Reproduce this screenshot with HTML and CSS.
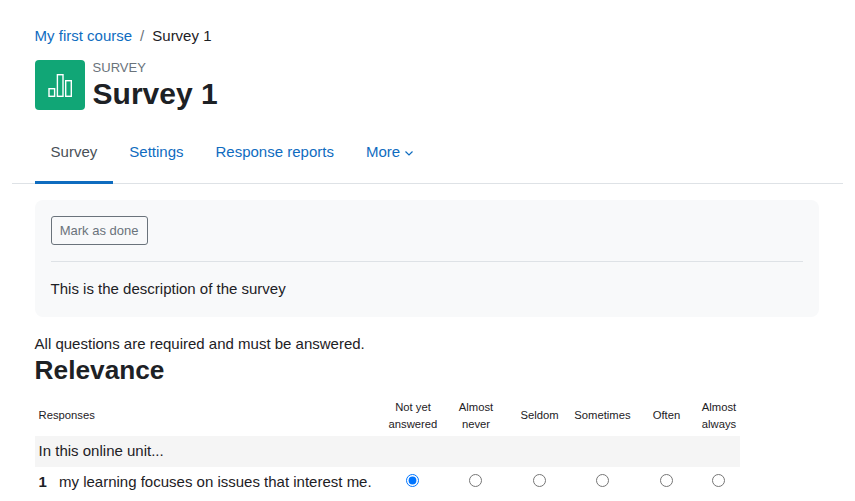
FILE: index.html
```html
<!DOCTYPE html>
<html>
<head>
    <meta charset="utf-8">
    <title>Survey 1</title>
    <link rel="stylesheet" href="styles.css">
</head>
<body>
    <div class="page-header">
        <nav class="breadcrumb">
            <a href="#">My first course</a>
            <span class="breadcrumb-sep">/</span>
            <span>Survey 1</span>
        </nav>
        <div class="activity-header">
            <div class="activity-icon">
                <svg width="24" height="24" viewBox="0 0 24 24" fill="none" stroke="#fff" stroke-width="1.4">
                    <rect x="1" y="15.7" width="5.6" height="7.6"/>
                    <rect x="9.4" y="1.7" width="5.6" height="21.6"/>
                    <rect x="17.7" y="7.7" width="5.6" height="15.6"/>
                </svg>
            </div>
            <div class="activity-titles">
                <div class="activity-type">SURVEY</div>
                <h1>Survey 1</h1>
            </div>
        </div>
    </div>

    <div class="tabs">
        <a class="tab active" href="#">Survey</a>
        <a class="tab" href="#">Settings</a>
        <a class="tab" href="#">Response reports</a>
        <a class="tab" href="#">More
            <svg class="caret" width="10" height="10" viewBox="0 0 10 10" fill="none" stroke="currentColor" stroke-width="1.2">
                <path d="M1.5 3.5 5 7l3.5-3.5"/>
            </svg>
        </a>
    </div>

    <div class="content">
        <div class="description-box">
            <button class="done-button">Mark as done</button>
            <hr>
            <p>This is the description of the survey</p>
        </div>

        <p class="required-note">All questions are required and must be answered.</p>
        <h2>Relevance</h2>

        <table class="survey-table">
            <thead>
                <tr>
                    <th class="col-question">Responses</th>
                    <th class="col-a">Not yet answered</th>
                    <th class="col-b">Almost never</th>
                    <th class="col-c">Seldom</th>
                    <th class="col-d">Sometimes</th>
                    <th class="col-e">Often</th>
                    <th class="col-f">Almost always</th>
                </tr>
            </thead>
            <tbody>
                <tr class="section-row">
                    <td colspan="7">In this online unit...</td>
                </tr>
                <tr class="question-row">
                    <td class="question"><b>1</b>my learning focuses on issues that interest me.</td>
                    <td><input type="radio" name="q1" checked></td>
                    <td><input type="radio" name="q1"></td>
                    <td><input type="radio" name="q1"></td>
                    <td><input type="radio" name="q1"></td>
                    <td><input type="radio" name="q1"></td>
                    <td class="col-f"><input type="radio" name="q1"></td>
                </tr>
            </tbody>
        </table>
    </div>
</body>
</html>
```

FILE: styles.css
```css
* {
    box-sizing: border-box;
}

html {
    overflow: hidden;
}

body {
    margin: 0;
    padding: 0 12px;
    background-color: #fff;
    color: #1d2125;
    font-family: "Liberation Sans", Arial, sans-serif;
    font-size: 15px;
    line-height: 1.5;
}

a {
    color: #0f6cbf;
    text-decoration: none;
}

.page-header {
    padding: 24px 22.6px 0;
}

.breadcrumb {
    display: flex;
    gap: 8px;
    height: 24px;
    align-items: center;
}

.breadcrumb-sep {
    color: #6a737b;
}

.activity-header {
    display: flex;
    margin-top: 12px;
}

.activity-icon {
    width: 50px;
    height: 50px;
    border-radius: 4px;
    background-color: #11a676;
    display: flex;
    align-items: center;
    justify-content: center;
}

.activity-titles {
    margin-left: 8px;
}

.activity-type {
    color: #6a737b;
    font-size: 13px;
    line-height: 15px;
}

h1 {
    margin: 0;
    font-size: 30px;
    font-weight: 700;
    line-height: 37px;
}

.tabs {
    display: flex;
    margin-top: 12px;
    padding: 0 22.6px;
    border-bottom: 1px solid #dee2e6;
    height: 60px;
}

.tab {
    padding: 0 16px;
    height: 60px;
    line-height: 56px;
    white-space: nowrap;
}

.tab.active {
    color: #495057;
    border-bottom: 3px solid #0f6cbf;
}

.caret {
    vertical-align: -1px;
}

.content {
    padding: 0 22.6px;
}

.description-box {
    margin-top: 16px;
    padding: 16px;
    height: 117px;
    width: 784px;
    background-color: #f8f9fa;
    border-radius: 8px;
}

.done-button {
    display: block;
    width: 97px;
    height: 29px;
    padding: 0;
    background: transparent;
    border: 1px solid #6a737b;
    border-radius: 3px;
    color: #6a737b;
    font-family: inherit;
    font-size: 13px;
}

.description-box hr {
    margin: 16px 0 16px;
    border: 0;
    border-top: 1px solid #dee2e6;
}

.description-box p {
    margin: 0;
}

.required-note {
    margin: 16px 0 0;
    line-height: 22px;
}

h2 {
    margin: 0 0 9px;
    font-size: 26.25px;
    font-weight: 700;
    line-height: 31px;
}

.survey-table {
    width: 705px;
    border-collapse: collapse;
    table-layout: fixed;
}

.survey-table th {
    padding: 0;
    height: 41px;
    font-size: 11.25px;
    font-weight: 400;
    line-height: 17px;
    text-align: center;
}

.survey-table th.col-question {
    padding-left: 4px;
    text-align: left;
}

.col-question { width: 346.4px; }
.col-a { width: 63px; }
.col-b { width: 63px; }
.col-c { width: 65px; }
.col-d { width: 61px; }
.col-e { width: 67px; }
.col-f { width: 40px; }

.survey-table th.col-a,
.survey-table th.col-b {
    padding-left: 1px;
}

.survey-table td {
    text-align: center;
}

.section-row td {
    height: 31px;
    padding: 0 4px;
    background-color: #f5f5f5;
}

.survey-table .section-row td {
    text-align: left;
}

.question-row td {
    vertical-align: top;
    padding-top: 7px;
}

.survey-table .col-f {
    padding-right: 3px;
}

.survey-table th.col-f {
    padding-right: 2px;
}

.survey-table td.question {
    height: 31px;
    padding: 4px 4px 0;
    text-align: left;
    white-space: nowrap;
}

.question b {
    display: inline-block;
    width: 20.4px;
}

.survey-table input {
    display: block;
    margin: 0 auto;
    width: 13px;
    height: 13px;
}
```
